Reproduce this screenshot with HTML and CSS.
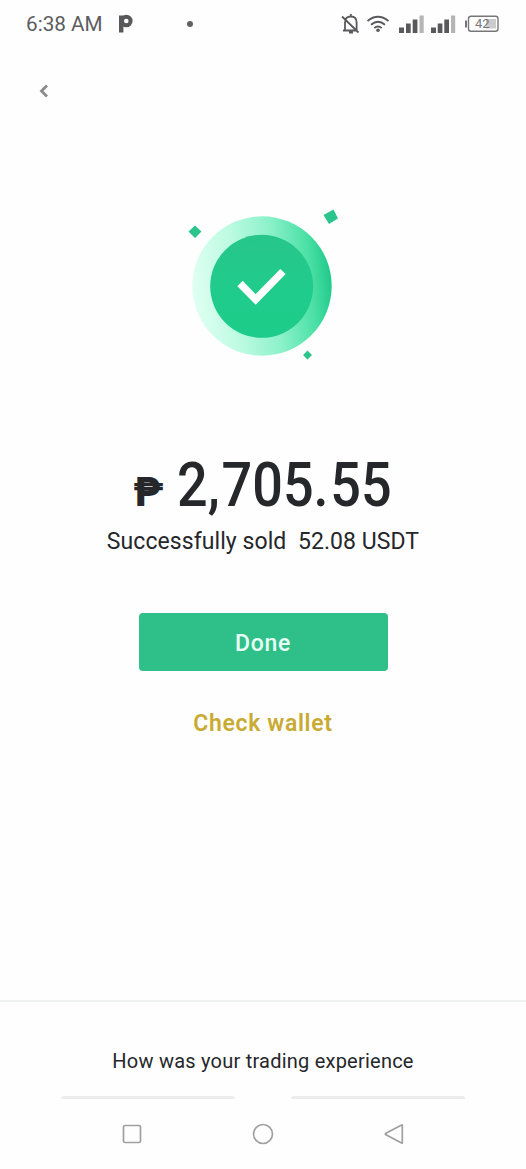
FILE: index.html
```html
<!DOCTYPE html>
<html lang="en">
<head>
<meta charset="utf-8">
<title>Trade complete</title>
<link rel="stylesheet" href="styles.css">
</head>
<body>
<div class="screen">
  <header class="status">
    <span class="time">6:38 AM</span>
    <svg class="app-mark" width="16" height="20" viewBox="0 0 16 20"><path d="M3.200 18.500V1.500" stroke="#59595b" stroke-width="4.400" fill="none"/><circle cx="8.300" cy="7" r="4.300" stroke="#59595b" stroke-width="4" fill="none"/></svg>
    <span class="dot"></span>
    <svg class="indicators" width="160" height="24" viewBox="0 0 160 24">
      <g fill="none" stroke="#59595b" stroke-width="1.8">
        <path d="M5 18.500V10.500C5 6.500 7 4.500 10.800 4.500S16.600 6.500 16.600 10.500V18.500M3 18.500H17.500M10.800 2V5M9 20.500H13M2 4.500L18.500 20.500"/>
        <path d="M27.500 9Q38 0.500 48.500 9M31 12.700Q38 6.700 45 12.700M34.300 16Q38 13 41.700 16"/>
      </g>
      <circle cx="38" cy="18.200" r="1.800" fill="#59595b"/>
      <g fill="#59595b"><path d="M59 15.500h5v5.500h-5zM66 11.500h4.700v9.500H66zM72.700 7.500h4.700v13.500h-4.700zM91 15.500h5v5.500h-5zM97.700 11.500h4.700v9.500h-4.700zM104.300 7.500h4.700v13.500h-4.700z"/></g>
      <path d="M79.500 3.500h4.200v17.500h-4.200zM111 3.500h4.200v17.500H111z" fill="#b5b5b5"/>
      <rect x="146" y="7" width="10" height="9.500" fill="#cbcbcb"/>
      <rect x="128.500" y="4.200" width="29.500" height="15" rx="2.500" fill="none" stroke="#77777a" stroke-width="1.400"/>
      <path d="M126 8.500v7" stroke="#77777a" stroke-width="2"/>
      <text class="battery" x="135" y="16.300">42</text>
    </svg>
  </header>
  <nav class="toolbar">
    <svg width="12" height="16" viewBox="0 0 12 16"><path d="M9 2.500L3.500 8L9 13.500" fill="none" stroke="#8a8a8a" stroke-width="2.800"/></svg>
  </nav>
  <main class="result">
    <svg class="success" width="170" height="170" viewBox="0 0 170 170">
      <defs>
        <linearGradient id="ring" x1="0" y1="0.550" x2="1" y2="0.450">
          <stop offset="0" stop-color="#e0fff4"/><stop offset=".3" stop-color="#bdfbe2"/><stop offset=".6" stop-color="#8bf1c9"/><stop offset=".85" stop-color="#4be0a6"/><stop offset="1" stop-color="#20c98a"/>
        </linearGradient>
        <linearGradient id="disc" x1="0" y1="0" x2="0" y2="1">
          <stop offset="0" stop-color="#27c68a"/><stop offset=".55" stop-color="#20cc8b"/><stop offset="1" stop-color="#1dcc8a"/>
        </linearGradient>
      </defs>
      <circle cx="82" cy="86" r="69.700" fill="url(#ring)"/>
      <circle cx="81.700" cy="86.300" r="51.500" fill="url(#disc)"/>
      <path d="M60 83.500L75.700 99.500L103 71.500" fill="none" stroke="#fff" stroke-width="7.500"/>
      <path d="M15 25.500L21.500 31.500L15 38L8.500 31.500ZM153.500 9.500L158 18.500L149 24L143.500 15ZM127.500 150.500L132 155L127.500 159.500L123 155Z" fill="#2bc48c"/>
    </svg>
    <div class="amount"><span class="peso">₱</span><span class="value">2<span class="mark">,</span>705<span class="mark">.</span>55</span></div>
    <p class="sold">Successfully sold&nbsp; 52.08 USDT</p>
    <button class="done">Done</button>
    <a class="wallet">Check wallet</a>
  </main>
  <section class="feedback">
    <p class="question">How was your trading experience</p>
    <div class="choices"><span class="choice"></span><span class="choice"></span></div>
  </section>
  <footer class="system-nav">
    <svg width="22" height="22" viewBox="0 0 22 22"><rect x="2.500" y="2.500" width="17" height="17" rx="1.500"/></svg>
    <svg width="22" height="22" viewBox="0 0 22 22"><circle cx="11" cy="11" r="9.500"/></svg>
    <svg width="22" height="22" viewBox="0 0 22 22"><path d="M19.300 2.500V19.800Q19.300 20.500 18.600 20.100L2.500 11.500Q2 11 2.500 10.500L18.600 2Q19.300 1.700 19.300 2.500Z"/></svg>
  </footer>
</div>
</body>
</html>
```
FILE: styles.css
```css
* { box-sizing: border-box; }
body { margin: 0; background: #fefefe; font-family: Roboto, "Liberation Sans", sans-serif; color: #25272b; }
p { margin: 0; }
svg { display: block; flex: none; }
.screen { width: 526px; height: 1169px; display: flex; flex-direction: column; overflow: hidden; }
.status { height: 48px; padding: 0 26px; display: flex; align-items: center; color: #5c5c5e; }
.time { width: 77px; font-size: 20.7px; line-height: 24px; white-space: nowrap; }
.app-mark { margin-left: 15px; }
.dot { width: 6px; height: 6px; margin-left: 53px; border-radius: 50%; background: #606062; }
.indicators { margin-left: 147px; }
.battery { font-size: 13px; fill: #77777a; }
.toolbar { height: 86px; padding: 35px 38px 0; }
.result { flex: 1; display: flex; flex-direction: column; align-items: center; }
.success { margin: 66px 0 0 4px; }
.amount { height: 70px; margin-top: 80px; display: flex; align-items: baseline; justify-content: center; gap: 13px; white-space: nowrap; }
.peso { width: 30px; font-size: 40px; font-weight: 900; }
.value { width: 216px; font-size: 61px; line-height: 70px; font-weight: 500; transform: scaleX(.885); transform-origin: left; }
.mark { letter-spacing: 2px; }
.sold { margin-top: 6px; font-size: 23px; line-height: 32px; letter-spacing: .07px; white-space: nowrap; }
.done { width: 249px; height: 58px; margin-top: 55px; padding: 2px 0 0; border: 0; border-radius: 4px; background: #2fbf88; color: #e9fff6; font: 500 23px Roboto, sans-serif; letter-spacing: .7px; }
.wallet { margin-top: 37px; color: #c9aa32; font-size: 23px; line-height: 32px; font-weight: 600; letter-spacing: .65px; }
.feedback { height: 99px; border-top: 2px solid #eff1f1; display: flex; flex-direction: column; align-items: center; }
.question { margin-top: 45px; font-size: 20px; line-height: 28px; letter-spacing: .23px; white-space: nowrap; }
.choices { width: 404px; margin-top: 21px; display: flex; justify-content: space-between; }
.choice { width: 174px; height: 3px; border-radius: 3px 3px 0 0; background: #ececec; }
.system-nav { height: 70px; padding: 0 121px 0; display: flex; align-items: center; justify-content: space-between; }
.system-nav svg { fill: none; stroke: #a0a0a0; stroke-width: 1.7; }
```
